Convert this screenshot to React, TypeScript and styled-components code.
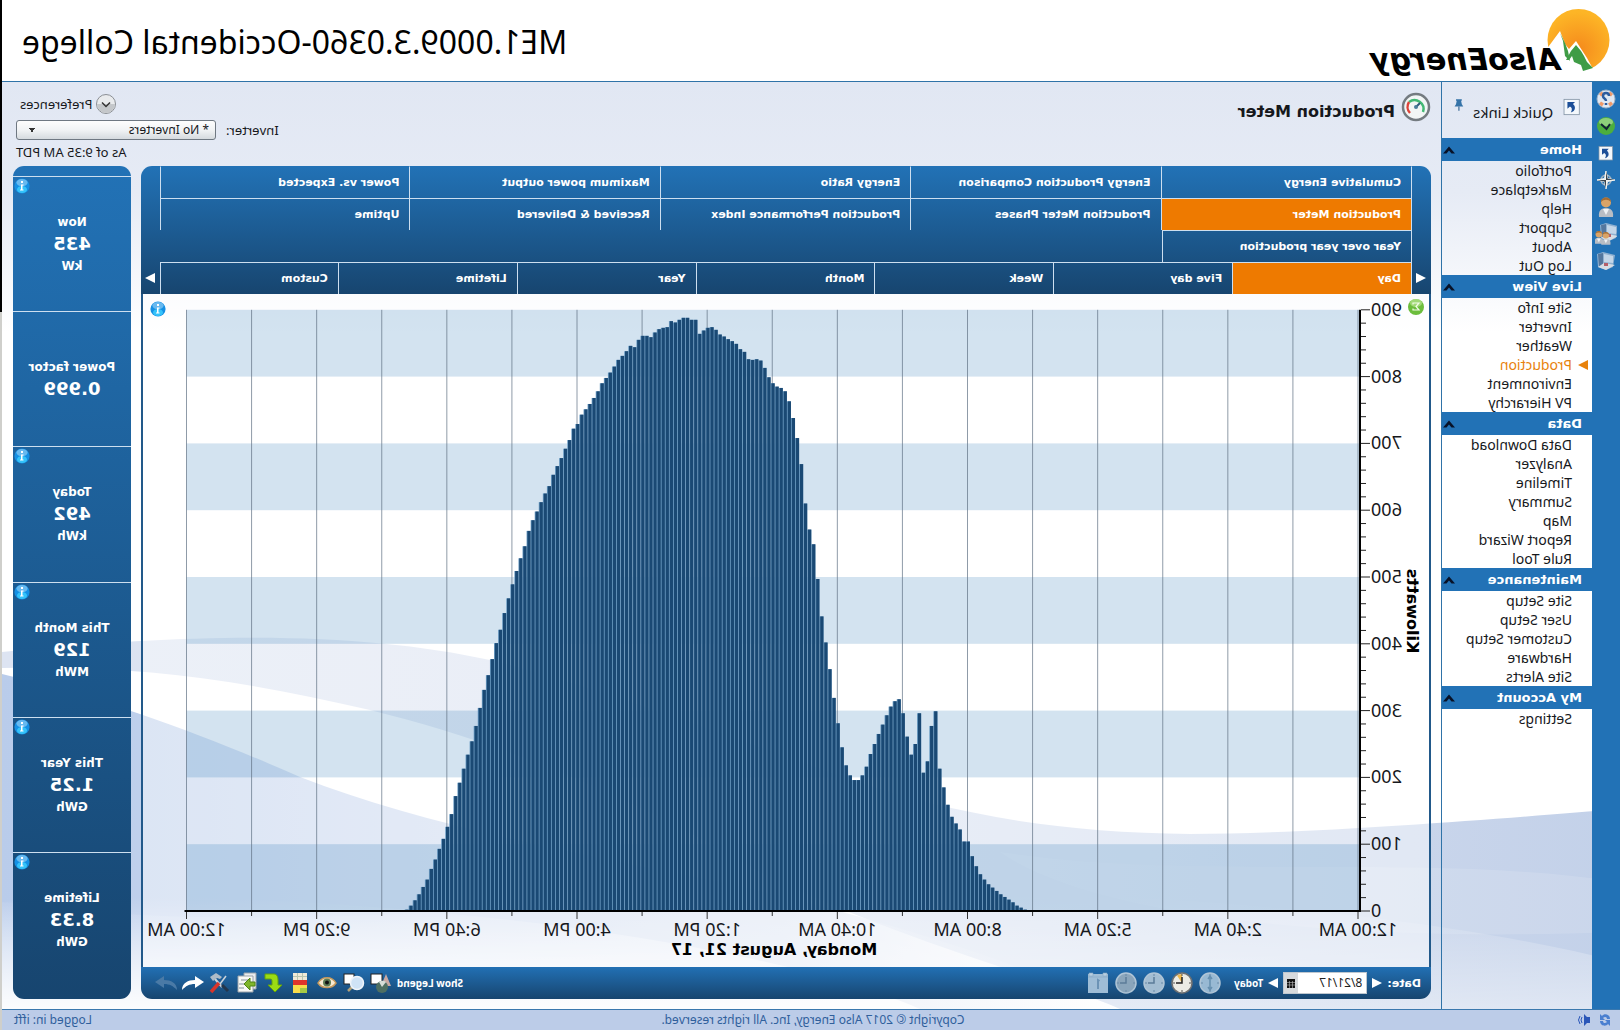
import React from 'react';
import styled, { createGlobalStyle } from 'styled-components';

const GlobalStyle = createGlobalStyle`
  * { box-sizing: border-box; }
  body { margin: 0; background: #fff; }
  button, input, select { font: inherit; color: inherit; margin: 0; }
  button { background: none; border: 0; padding: 0; cursor: pointer; }
  a { color: inherit; text-decoration: none; }
  h1, h2, p, ul { margin: 0; padding: 0; font-weight: normal; }
  ul { list-style: none; }
  svg { display: block; }
`;

const plain = '"Noto Sans", sans-serif';
const heavy = '"DejaVu Sans", sans-serif';
const blue = '#2272b6';
const deep = '#17456f';

/* The whole window is shown as a mirror image. */
const Mirror = styled.div`
  display: flex;
  min-height: 100vh;
  transform: scaleX(-1);
  font: 13px/19px ${plain};
  color: #16181c;
`;
const Edge = styled.div`
  width: 2px;
  background: linear-gradient(#000 312px, #cfcfcb 312px);
`;
const Window = styled.div`
  flex: 1;
  min-width: 0;
  display: flex;
  flex-direction: column;
`;
const Header = styled.header`
  display: flex;
  align-items: center;
  justify-content: space-between;
  height: 82px;
  padding-right: 20px;
  border-bottom: 1px solid #2f73a8;
  background: #fff;
`;
const SiteTitle = styled.h1`
  padding-top: 3px;
  font-size: 32px;
  line-height: 40px;
  color: #000;
`;
const Body = styled.div`
  position: relative;
  flex: 1;
  display: flex;
  min-height: 0;
`;
const Backdrop = styled.svg`
  position: absolute;
  inset: 0;
  width: 100%;
  height: 100%;
  z-index: -1;
`;
const IconRail = styled.nav`
  width: 28px;
  background: ${blue};
  display: flex;
  flex-direction: column;
  align-items: center;
  gap: 5px;
  padding-top: 6px;
`;
const RailButton = styled.button`
  width: 22px;
  height: 22px;
`;
const Sidebar = styled.nav`
  width: 151px;
  border-right: 1px solid #2f73a8;
`;
const QuickLinks = styled.div`
  display: flex;
  gap: 9px;
  height: 56px;
  padding: 14px 12px 0 11px;
  font-size: 15px;
  line-height: 24px;
  span { flex: 1; padding-top: 4px; white-space: nowrap; }
`;
const SectionHead = styled.button`
  display: flex;
  align-items: center;
  justify-content: space-between;
  width: 100%;
  height: 23px;
  padding: 0 1px 0 10px;
  background: ${blue};
  color: #fff;
  font: bold 13px/23px ${heavy};
`;
const NavLink = styled.a<{ $active?: boolean }>`
  display: flex;
  align-items: center;
  height: 19px;
  font-size: 14px;
  line-height: 19px;
  color: ${p => (p.$active ? '#e8820c' : 'inherit')};
  &::before {
    content: '';
    width: 0;
    margin: 0 6px 0 4px;
    border: 5px solid transparent;
    border-right: 0;
    border-left: 10px solid ${p => (p.$active ? '#e8820c' : 'transparent')};
  }
`;
const Main = styled.main`
  flex: 1;
  min-width: 0;
  display: flex;
  flex-direction: column;
  padding: 0 11px 10px 10px;
`;
const TopBar = styled.div`
  display: flex;
  justify-content: space-between;
  height: 84px;
`;
const PageTitle = styled.h2`
  display: flex;
  align-items: center;
  gap: 6px;
  height: 30px;
  margin-top: 10px;
  font: bold 16px/30px ${heavy};
  span { padding-top: 10px; }
`;
const Controls = styled.div`
  display: grid;
  grid-template-columns: auto 200px;
  grid-template-rows: 24px 28px 16px;
  column-gap: 10px;
  align-items: center;
  align-content: start;
  padding: 10px 3px 0 0;
`;
const Preferences = styled.button`
  grid-column: 2;
  justify-self: end;
  display: flex;
  align-items: center;
  gap: 4px;
  padding-right: 4px;
`;
const Picker = styled.select`
  appearance: none;
  width: 100%;
  height: 20px;
  padding: 0 6px;
  border: 1px solid #6f7882;
  border-radius: 3px;
  background:
    linear-gradient(#333, #333) right 12px top 7px / 6px 1px no-repeat,
    linear-gradient(#333, #333) right 13px top 8px / 4px 1px no-repeat,
    linear-gradient(#333, #333) right 14px top 9px / 2px 2px no-repeat,
    linear-gradient(#fdfdfd, #f1f3f5 50%, #d5dade);
  font-size: 12px;
  line-height: 16px;
`;
const AsOf = styled.p`
  grid-column: 2;
  justify-self: end;
`;
const Columns = styled.div`
  flex: 1;
  display: flex;
  gap: 10px;
  min-height: 0;
`;
const Panel = styled.section`
  flex: 1;
  min-width: 0;
  display: flex;
  flex-direction: column;
  border-radius: 11px;
  overflow: hidden;
`;
const PanelHead = styled.div`
  background: linear-gradient(${blue}, ${deep});
`;
const TabRow = styled.div`
  display: grid;
  grid-template-columns: 19px 1fr 19px;
`;
const Tabs = styled.div<{ $columns: number }>`
  grid-column: 2;
  display: grid;
  grid-template-columns: repeat(${p => p.$columns}, 1fr);
`;
const Tab = styled.button<{ $active?: boolean; $first?: boolean; $end?: boolean }>`
  height: 32px;
  padding: 0 10px;
  text-align: left;
  font: bold 11px/30px ${heavy};
  color: #fff;
  white-space: nowrap;
  border-left: 1px solid #cddff0;
  border-top: 1px solid ${p => (p.$first ? 'transparent' : '#cddff0')};
  ${p => p.$end && 'border-right: 1px solid #cddff0;'}
  ${p => p.$active && 'background: #ee7a00;'}
`;
const Step = styled.button<{ $dir: 'back' | 'on' }>`
  place-self: center;
  border: 5px solid transparent;
  ${p => (p.$dir === 'back'
    ? 'border-left: 0; border-right: 10px solid #fff;'
    : 'border-right: 0; border-left: 10px solid #fff;')}
`;
const ChartArea = styled.div`
  flex: 1;
  min-height: 0;
  border: solid #22598a;
  border-width: 0 2px;
  background: rgba(255, 255, 255, 0.45);
  svg { width: 100%; height: 100%; }
`;
const Toolbar = styled.div`
  display: flex;
  align-items: center;
  gap: 5px;
  height: 32px;
  padding: 0 14px 0 10px;
  background: linear-gradient(#2270b4, ${deep});
  color: #fff;
  font-weight: bold;
  font-size: 10px;
`;
const DateLabel = styled.label`
  font-family: ${heavy};
  font-size: 11px;
`;
const DateField = styled.div`
  display: flex;
  height: 22px;
  width: 84px;
  border: 1px solid #bfc7cf;
  background: #fff;
  color: #222;
  input {
    flex: 1;
    min-width: 0;
    border: 0;
    padding: 0 4px;
    font: 12px/20px ${plain};
    background: none;
  }
  button {
    display: grid;
    place-items: center;
    width: 14px;
    background: #d7dadd;
  }
`;
const ClockSet = styled.div`
  display: flex;
  gap: 6px;
  flex: 1;
  padding-left: 8px;
`;
const ToolSet = styled.div`
  display: flex;
  justify-content: space-between;
  width: 237px;
  button { width: 22px; height: 22px; }
`;
const Stats = styled.aside`
  width: 118px;
  display: flex;
  flex-direction: column;
  padding: 10px 0 12px;
  border-radius: 11px;
  background: linear-gradient(${blue}, ${deep});
  color: #fff;
  text-align: center;
`;
const Stat = styled.div`
  position: relative;
  flex: 1;
  display: flex;
  flex-direction: column;
  justify-content: center;
  border-top: 1px solid #cddff0;
  font: bold 12px/20px ${heavy};
  strong { font-size: 18px; line-height: 24px; }
  svg { position: absolute; top: 1px; right: 1px; }
`;
const Footer = styled.footer`
  display: grid;
  grid-template-columns: 1fr auto 1fr;
  align-items: center;
  height: 21px;
  padding: 0 12px 0 8px;
  border-top: 1px solid #3a78ae;
  background: #bccce8;
  color: #30609c;
  font-size: 12px;
  line-height: 18px;
`;
const FooterIcons = styled.div`
  display: flex;
  gap: 7px;
`;
const Login = styled.span`
  justify-self: end;
`;

const menu: [string, string[]][] = [
  ['Home', ['Portfolio', 'Marketplace', 'Help', 'Support', 'About', 'Log Out']],
  ['Live View', ['Site Info', 'Inverter', 'Weather', 'Production', 'Environment', 'PV Hierarchy']],
  ['Data', ['Data Download', 'Analyzer', 'Timeline', 'Summary', 'Map', 'Report Wizard', 'Rule Tool']],
  ['Maintenance', ['Site Setup', 'User Setup', 'Customer Setup', 'Hardware', 'Site Alerts']],
  ['My Account', ['Settings']],
];
const charts = [
  'Cumulative Energy', 'Energy Production Comparison', 'Energy Ratio', 'Maximum power output', 'Power vs. Expected',
  'Production Meter', 'Production Meter Phases', 'Production Performance Index', 'Received & Delivered', 'Uptime',
  'Year over year production',
];
const periods = ['Day', 'Five day', 'Week', 'Month', 'Year', 'Lifetime', 'Custom'];
const stats: [string, string, string][] = [
  ['Now', '435', 'kW'], ['Power factor', '0.999', ''], ['Today', '492', 'kWh'],
  ['This Month', '129', 'MWh'], ['This Year', '1.25', 'GWh'], ['Lifetime', '8.33', 'GWh'],
];

/* Kilowatts for each five-minute slot, starting at slot 81 of the day. */
const firstSlot = 81;
const power = [
  2, 5, 8, 13, 17, 21, 25, 30, 35, 40, 47, 55, 67, 82, 104, 104, 122, 131, 141, 159, 185, 213, 299, 277, 224, 207,
  296, 250, 234, 261, 296, 317, 314, 306, 293, 279, 265, 250, 235, 216, 203, 196, 196, 203, 218, 245, 281, 319, 362,
  402, 441, 497, 549, 571, 610, 669, 708, 738, 763, 778, 783, 785, 790, 799, 813, 824, 826, 825, 826, 837, 841, 849,
  853, 856, 860, 863, 870, 874, 873, 869, 864, 885, 885, 888, 888, 885, 881, 883, 874, 873, 871, 866, 859, 861, 861,
  855, 844, 846, 838, 831, 825, 815, 806, 798, 790, 778, 768, 759, 751, 743, 729, 722, 705, 692, 678, 666, 653, 636,
  625, 612, 598, 585, 569, 546, 528, 509, 489, 468, 446, 421, 401, 377, 353, 331, 304, 277, 254, 234, 213, 192, 172,
  145, 126, 108, 93, 77, 63, 47, 36, 25, 16, 8, 2,
];
const times = ['12:00 AM', '2:40 AM', '5:20 AM', '8:00 AM', '10:40 AM', '1:20 PM', '4:00 PM', '6:40 PM', '9:20 PM', '12:00 AM'];

const InfoIcon = ({ x, y, size = 16 }: { x?: number; y?: number; size?: number }) => (
  <svg x={x} y={y} width={size} height={size} viewBox="0 0 16 16" style={{ width: size, height: size }}>
    <circle cx="8" cy="8" r="7.6" fill="#1590e4" />
    <ellipse cx="8" cy="11.5" rx="5" ry="3.6" fill="#35c3fa" />
    <ellipse cx="8" cy="4.6" rx="5.6" ry="3.6" fill="#8ccbf4" opacity=".7" />
    <path d="M7 3h2v2H7zM6.500 6.500h2.500V11.500h1v1H6.500v-1h1V7.500h-1z" fill="#fff" />
  </svg>
);

const left = 71;
const plotWidth = 1171.5;
const base = 617;
const unit = 66.8;
const slot = plotWidth / 288;

const Chart = () => (
  <svg viewBox="0 0 1286 673" role="img" aria-label="Production in kilowatts">
    {[0, 2, 4, 6, 8].map(n => (
      <rect key={n} x={left - 1} y={base - (n + 1) * unit} width={plotWidth + 1} height={unit} fill="rgba(34,114,182,.2)" />
    ))}
    {Array.from({ length: 19 }, (_, i) => {
      const x = left + (i * plotWidth) / 18;
      return (
        <g key={i}>
          <line x1={x} x2={x} y1={base - 9 * unit} y2={base} stroke="#5f7183" strokeOpacity=".7" />
          <line x1={x} x2={x} y1={base} y2={base + (i % 2 ? 5 : 8)} stroke="#333" />
        </g>
      );
    })}
    {power.map((kw, i) => {
      const x = left + (firstSlot + i + 0.4) * slot;
      const h = (kw * unit) / 100;
      return (
        <g key={i}>
          <rect x={x} y={base - h} width={slot} height={h} fill="#6f9fc6" />
          <rect x={x} y={base - h} width={slot - 0.8} height={h} fill="#1a4974" />
        </g>
      );
    })}
    {Array.from({ length: 46 }, (_, i) => {
      const y = base - (i * unit) / 5;
      return <line key={i} x1={i % 5 ? 63 : 59} x2={68} y1={y} y2={y} stroke="#222" />;
    })}
    <path d={`M69 ${base - 9 * unit}V${base}H${left + plotWidth + 2}`} fill="none" stroke="#000" strokeWidth="2" />
    <g fontFamily='"Noto Sans", sans-serif' fontSize="18" fill="#16181c">
      {Array.from({ length: 10 }, (_, i) => (
        <text key={i} x="58" y={base - i * unit + 6} textAnchor="end">{i * 100 || 0}</text>
      ))}
      {times.map((t, i) => (
        <text key={i} x={left + (i * plotWidth) / 9} y="642" textAnchor="middle">{t}</text>
      ))}
    </g>
    <g fontFamily='"DejaVu Sans", sans-serif' fontSize="16" fontWeight="bold" fill="#000" textAnchor="middle">
      <text x="655" y="661">Monday, August 21, 17</text>
      <text transform="translate(22 317) rotate(-90)">Kilowatts</text>
    </g>
    <circle cx="13" cy="13" r="8" fill="#6cbd3c" />
    <ellipse cx="13" cy="9" rx="6" ry="4" fill="#b8e48f" opacity=".7" />
    <path d="M16 10.500V9h-6l3 3.500-3 3.500h6v-1.500" fill="none" stroke="#f2fbe8" strokeWidth="1.200" />
    <InfoIcon x={1263} y={7} />
  </svg>
);

const Logo = () => (
  <svg width="260" height="81" viewBox="0 0 260 81" role="img" aria-label="AlsoEnergy">
    <defs>
      <radialGradient id="sun" cx=".5" cy=".65" r=".6">
        <stop offset="0" stopColor="#f58a1c" />
        <stop offset="1" stopColor="#fdb526" />
      </radialGradient>
    </defs>
    <circle cx="41.5" cy="40" r="31" fill="url(#sun)" />
    <path d="M60 31L74 50V74H36L27 69L33 58L44 41L51 49L55 44Z" fill="#fff" />
    <path d="M60 33L57 41L55 56L50 61L52 51L55 43Z" fill="#3f9c46" />
    <path d="M44 45L39 51L36 56L33 62L27 68L37 71L39 65L46 62L48 56L51 60L54 60L49 51Z" fill="#3f9c46" />
    <text x="60" y="70" fontFamily='"DejaVu Sans", sans-serif' fontSize="30" fontWeight="bold" fontStyle="italic" fill="#000">AlsoEnergy</text>
  </svg>
);

const Waves = () => (
  <Backdrop viewBox="0 0 1618 927" preserveAspectRatio="none" aria-hidden="true">
    <defs>
      <linearGradient id="sky" x2="0" y2="1">
        <stop offset="0" stopColor="#e1e7f3" />
        <stop offset=".12" stopColor="#e6ebf5" />
        <stop offset=".27" stopColor="#fff" />
      </linearGradient>
      <linearGradient id="wave">
        <stop offset="0" stopColor="#c3d1e9" />
        <stop offset=".45" stopColor="#d6dff0" />
        <stop offset="1" stopColor="#dde4f2" />
      </linearGradient>
      <linearGradient id="swell">
        <stop offset="0" stopColor="#e0e7f3" stopOpacity="0" />
        <stop offset=".3" stopColor="#dbe3f2" />
        <stop offset="1" stopColor="#b9cceb" />
      </linearGradient>
      <linearGradient id="fade" x2="0" y2="1">
        <stop offset="0" stopColor="#fff" stopOpacity="0" />
        <stop offset="1" stopColor="#fff" stopOpacity=".9" />
      </linearGradient>
    </defs>
    <rect width="1618" height="927" fill="url(#sky)" />
    <path d="M0 727C100 735 300 752 430 752C560 750 660 735 780 694C900 650 1040 600 1130 578C1250 552 1400 548 1618 570V586C1480 582 1370 600 1250 628C1100 665 980 720 860 790C720 860 560 900 500 927H0Z" fill="url(#wave)" />
    <path d="M1618 592C1500 620 1400 660 1320 695C1200 742 1050 770 900 800C760 830 600 880 500 927H1618Z" fill="url(#swell)" />
    <path d="M0 800C200 770 420 800 620 770C520 840 250 860 0 850Z" fill="#fff" opacity=".12" />
    <path d="M0 880C200 830 500 800 900 815C1200 830 1400 850 1618 820V927H0Z" fill="url(#fade)" opacity=".5" />
    <path d="M700 927C900 840 1400 800 1618 820V927Z" fill="url(#fade)" />
  </Backdrop>
);

const Box = ({ children, size = 22 }: { children: React.ReactNode; size?: number }) => (
  <svg width={size} height={size} viewBox="0 0 22 22">{children}</svg>
);
const ShortcutArt = () => (
  <>
    <rect x="2" y="2" width="18" height="18" fill="#f4f8fc" stroke="#8797a8" />
    <path d="M7 5h9v8l-3-2.500C10.500 12 10 14 12 17.500C6 16 6 10 9.500 7.500Z" fill="#1d4f98" />
  </>
);
const PersonArt = () => (
  <>
    <path d="M4 21C3 14 7 12 11 12S19 14 18 21Z" fill="#b8bdc4" />
    <path d="M8 13l3 6 3-6z" fill="#eef2f5" />
    <circle cx="11" cy="6.500" r="5" fill="#d9a468" />
    <path d="M6 6C6 0 16 0 16 6C13 3 9 3 6 6Z" fill="#a26c34" />
  </>
);
const ServerArt = () => (
  <>
    <path d="M2 5l12-3 6 2-1 13-8 3-7-3Z" fill="#8fb0d0" />
    <path d="M4 6l9-2v8l-9 1Z" fill="#c4d6e8" />
    <path d="M14 3l5 1-1 12-4 2Z" fill="#54779e" />
    <path d="M2 15l11-2 6 4-8 3Z" fill="#d7dde4" />
    <path d="M9 13h4v3H9z" fill="#b55f69" />
  </>
);
const rail: [string, React.ReactNode][] = [
  ['Help', <>
    <circle cx="11" cy="11" r="9" fill="#dfe8f3" stroke="#9eb2c8" />
    <path d="M4 6l3-2.500 2 3-3 2zM18 6l-3-2.500-2 3 3 2zM4 16l3 2.500 2-3-3-2zM18 16l-3 2.500-2-3 3-2z" fill="#ef9a6a" />
    <path d="M8 8C8 4 14 4 14 8C14 11 11 10 11 13M11 15v2" fill="none" stroke="#2d5c9e" strokeWidth="2.500" />
  </>],
  ['Status', <>
    <circle cx="11" cy="11" r="9" fill="#4cae3f" />
    <ellipse cx="11" cy="7" rx="7" ry="4" fill="#a9dd96" opacity=".7" />
    <path d="M7 9l3.500 5L16 9" fill="none" stroke="#123" strokeWidth="2" />
  </>],
  ['Quick Links', <g transform="translate(3 3) scale(.75)"><ShortcutArt /></g>],
  ['Compass', <>
    <circle cx="11" cy="11" r="5" fill="none" stroke="#9fb0bf" strokeWidth="1.500" />
    <path d="M11 2l1.500 7.500L20 11l-7.500 1.500L11 20l-1.500-7.500L2 11l7.500-1.500z" fill="#f4f4f0" stroke="#f4f4f0" />
    <path d="M11 2v9H2l7.500-1.500zM11 20v-9h9l-7.500 1.500z" fill="#39434d" />
  </>],
  ['User', <PersonArt />],
  ['User groups', <>
    <g transform="translate(-3 -2)"><ServerArt /></g>
    <g transform="translate(11 7) scale(.65)"><PersonArt /></g>
    <g transform="translate(4 8) scale(.65)"><PersonArt /></g>
  </>],
  ['Hardware', <ServerArt />],
];

const clocks = ['Hour', 'Six hours', 'Twelve hours', 'Day', 'Calendar'];
const Clock = ({ kind }: { kind: number }) => (
  kind === 4 ? (
    <Box>
      <rect x="1" y="2" width="20" height="19" fill="#9fbdd6" />
      <path d="M2 1h4v3H2zM16 1h4v3h-4zM1 5h20" fill="#b9cfe1" stroke="#86a7c4" strokeWidth=".6" />
      <path d="M9.500 9l1.500-1v9" fill="none" stroke="#6c93b5" strokeWidth="2" />
    </Box>
  ) : (
    <Box>
      <circle cx="11" cy="11" r="10" fill={['#98b9d3', '#ecebe4', '#a3bdd2', '#8aa5bb'][kind]} stroke={kind === 1 ? '#6f7071' : '#b0c5d6'} strokeWidth="1.500" />
      {kind === 1 && <path d="M11 11V2a9 9 0 0 1 5 1.500z" fill="#f0b84a" />}
      {kind === 0
        ? <path d="M11 4v14M9 7l2-3 2 3M9 15l2 3 2-3" fill="none" stroke="#6690b0" strokeWidth="1.500" />
        : <path d="M11 5v6h6" fill="none" stroke={kind === 1 ? '#222' : '#5c7c99'} strokeWidth="1.500" />}
      <path d="M11 2v2M11 18v2M2 11h2M18 11h2" stroke={kind === 1 ? '#555' : '#6b8ba8'} />
    </Box>
  )
);

const tools: [string, React.ReactNode][] = [
  ['Shapes', <>
    <rect x="10" y="2" width="11" height="10" fill="#fff" stroke="#222" />
    <path d="M6 2l5 12H1z" fill="#c9a9a3" />
    <circle cx="10" cy="15" r="6" fill="#4e6f62" />
    <path d="M10 15L6 10a6 6 0 0 1 7 0z" fill="#d6ddd8" />
  </>],
  ['Zoom', <>
    <rect x="11" y="2" width="10" height="10" fill="#fff" stroke="#222" />
    <path d="M13 15l4 4" stroke="#b3a178" strokeWidth="2.500" />
    <circle cx="8" cy="11" r="6.500" fill="#cfe3f6" stroke="#eef4fa" strokeWidth="1.500" />
  </>],
  ['View', <>
    <path d="M2 11C6 4 16 4 20 11C16 17 6 17 2 11Z" fill="#f7ead2" stroke="#c79a5c" strokeWidth="1.500" />
    <circle cx="11" cy="10.500" r="4" fill="#5e7d55" />
    <circle cx="11" cy="10.500" r="2" fill="#111" />
  </>],
  ['Table colors', <>
    <path d="M4 1h14v20H4z" fill="#f0ead8" />
    <path d="M4 8h14v5H4z" fill="#e0342b" />
    <path d="M4 13h14v3H4z" fill="#f8dc4b" />
    <path d="M4 16h7v5H4z" fill="#a6c944" />
    <path d="M11 16h7v5h-7z" fill="#f8dc4b" />
    <path d="M8.500 1v7M13.500 1v7M4 4.500h14" stroke="#b9c6b0" />
  </>],
  ['Download', <path d="M19 2H10C7 2 6 5 6 8v5H2l7 7 7-7h-4V9c0-2 1-2 3-2h4z" fill="#9bdc14" stroke="#65a30b" />],
  ['Export', <>
    <path d="M2 1h12v16H2z" fill="#e9ecee" stroke="#9ba3aa" />
    <path d="M5 4h15v16H5z" fill="#f8f8f5" stroke="#9ba3aa" />
    <path d="M8 8h9M14 12h5M14 16h5" stroke="#aab3ba" strokeWidth="1.500" />
    <path d="M3 10h5V6l6 6-6 6v-4H3z" fill="#7fb52b" stroke="#4f8415" />
  </>],
  ['Settings', <>
    <path d="M5 4l6 8" stroke="#cbd3da" strokeWidth="1.500" />
    <path d="M16 7l-7 8" stroke="#cbd3da" strokeWidth="2" />
    <path d="M12 11l8 9" stroke="#d8352c" strokeWidth="3.500" />
    <path d="M3 19l6-6" stroke="#24364c" strokeWidth="3" />
    <path d="M9 5l6-4 6 4-3 4-4-3-3 1z" fill="#aebbc7" />
  </>],
  ['Undo', <path d="M0 10l9-6v4c7 0 13 3 13 10C18 14 15 12 9 12v4z" fill="#fff" />],
  ['Redo', <path d="M22 10l-9-6v4C6 8 0 11 0 18c4-4 7-6 13-6v4z" fill="#4a7aa6" />],
];

export default function App() {
  return (
    <>
      <GlobalStyle />
      <Mirror>
        <Window>
          <Header>
            <Logo />
            <SiteTitle>ME1.0009.3.0360-Occidental College</SiteTitle>
          </Header>
          <Body>
            <Waves />
            <IconRail aria-label="Shortcuts">
              {rail.map(([name, art]) => (
                <RailButton key={name} aria-label={name}><Box>{art}</Box></RailButton>
              ))}
            </IconRail>
            <Sidebar>
              <QuickLinks>
                <Box size={22}><ShortcutArt /></Box>
                <span>Quick Links</span>
                <svg width="12" height="18" viewBox="0 0 14 18">
                  <path d="M3 1h8v2H10l1 5 2 3H1l2-3 1-5H3z" fill="#3573a8" />
                  <path d="M7 11v6" stroke="#2c5f8e" strokeWidth="1.500" />
                </svg>
              </QuickLinks>
              {menu.map(([title, links]) => (
                <section key={title}>
                  <SectionHead>
                    {title}
                    <svg width="12" height="8" viewBox="0 0 12 8"><path d="M0 7.500L6 .500L12 7.500H8.500L6 4.500L3.500 7.500Z" fill="#081228" /></svg>
                  </SectionHead>
                  <ul>
                    {links.map(l => (
                      <li key={l}><NavLink href="#" $active={l === 'Production'}>{l}</NavLink></li>
                    ))}
                  </ul>
                </section>
              ))}
            </Sidebar>
            <Main>
              <TopBar>
                <PageTitle>
                  <svg width="30" height="30" viewBox="0 0 30 30">
                    <circle cx="15" cy="15" r="13" fill="#f2f6f5" stroke="#747b80" strokeWidth="2.500" />
                    <path d="M8 20A9 9 0 0 1 22 10" fill="none" stroke="#43b974" strokeWidth="2.500" />
                    <path d="M22 10A9 9 0 0 1 21 21" fill="none" stroke="#dc4339" strokeWidth="2.500" />
                    <path d="M15 15l-4-4" stroke="#2d5a78" strokeWidth="2" />
                    <circle cx="15" cy="15" r="2" fill="#4a7d9b" />
                  </svg>
                  <span>Production Meter</span>
                </PageTitle>
                <Controls>
                  <Preferences>
                    <svg width="20" height="20" viewBox="0 0 20 20">
                      <circle cx="10" cy="10" r="9.500" fill="#e9ebed" stroke="#8b8f94" />
                      <path d="M1 10a9 9 0 0 0 18 0z" fill="#c4c7ca" />
                      <path d="M6 8.500l4 4 4-4" fill="none" stroke="#333" strokeWidth="1.500" />
                    </svg>
                    Preferences
                  </Preferences>
                  <label htmlFor="inverter">Inverter:</label>
                  <Picker id="inverter"><option>* No Inverters</option></Picker>
                  <AsOf>As of 9:35 AM PDT</AsOf>
                </Controls>
              </TopBar>
              <Columns>
                <Panel>
                  <PanelHead>
                    <TabRow>
                      <Tabs $columns={5}>
                        {charts.map((c, i) => (
                          <Tab key={c} $first={i < 5} $end={i % 5 === 4 || i === 10} $active={c === 'Production Meter'}>{c}</Tab>
                        ))}
                      </Tabs>
                    </TabRow>
                    <TabRow>
                      <Step $dir="back" aria-label="Previous period" />
                      <Tabs $columns={7}>
                        {periods.map((p, i) => (
                          <Tab key={p} $end={i === 6} $active={i === 0}>{p}</Tab>
                        ))}
                      </Tabs>
                      <Step $dir="on" aria-label="Next period" />
                    </TabRow>
                  </PanelHead>
                  <ChartArea><Chart /></ChartArea>
                  <Toolbar>
                    <DateLabel htmlFor="date">Date:</DateLabel>
                    <Step $dir="back" aria-label="Previous day" />
                    <DateField>
                      <input id="date" defaultValue="8/21/17" />
                      <button aria-label="Open calendar">
                        <svg width="8" height="9" viewBox="0 0 8 9">
                          <rect width="8" height="9" fill="#111" />
                          <path d="M0 3.500h8M0 6h8M2.500 2v7M5.500 2v7" stroke="#bbb" strokeWidth=".6" />
                        </svg>
                      </button>
                    </DateField>
                    <Step $dir="on" aria-label="Next day" />
                    <button>Today</button>
                    <ClockSet>
                      {clocks.map((c, i) => <button key={c} aria-label={c}><Clock kind={i} /></button>)}
                    </ClockSet>
                    <button>Show Legend</button>
                    <ToolSet>
                      {tools.map(([name, art]) => <button key={name} aria-label={name}><Box>{art}</Box></button>)}
                    </ToolSet>
                  </Toolbar>
                </Panel>
                <Stats>
                  {stats.map(([label, value, u]) => (
                    <Stat key={label}>
                      <span>{label}</span>
                      <strong>{value}</strong>
                      {u && <span>{u}</span>}
                      {u && <InfoIcon />}
                    </Stat>
                  ))}
                </Stats>
              </Columns>
            </Main>
          </Body>
          <Footer>
            <FooterIcons>
              <svg width="14" height="16" viewBox="0 0 14 16">
                <path d="M2 7C2 2 8 1 10 4l2-2v6H7l2-2C7 4 5 5 5 7zM12 9c0 5-6 6-8 3l-2 2V8h5l-2 2c2 2 4 1 4-1z" fill="#4a7fd0" />
              </svg>
              <svg width="14" height="16" viewBox="0 0 14 16">
                <path d="M1 5h3l3-3v12l-3-3H1z" fill="#2a56b8" />
                <path d="M9 5q2 3 0 6M11 4q3 4 0 8" fill="none" stroke="#2a56b8" />
              </svg>
            </FooterIcons>
            <span>Copyright © 2017 Also Energy, Inc. All rights reserved.</span>
            <Login>Logged in: ifft</Login>
          </Footer>
        </Window>
        <Edge />
      </Mirror>
    </>
  );
}
